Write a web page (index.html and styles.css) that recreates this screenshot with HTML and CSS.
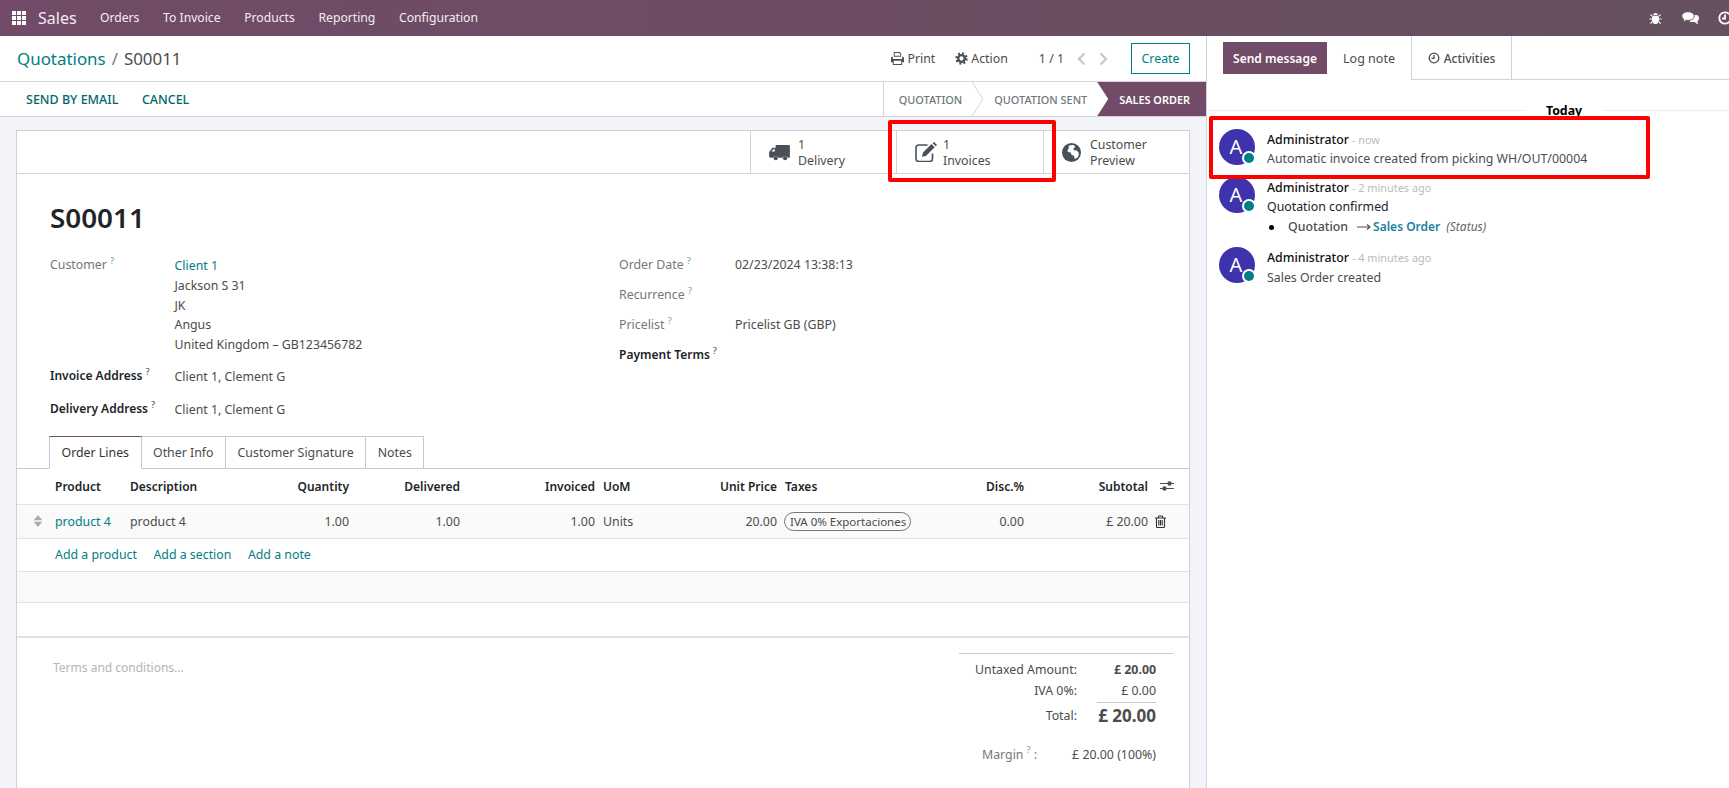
FILE: index.html
```html
<!DOCTYPE html>
<html lang="en">
<head>
<meta charset="utf-8">
<title>S00011 - Sales</title>
<link rel="stylesheet" href="styles.css">
</head>
<body>
<nav class="navbar">
  <svg class="apps" viewBox="0 0 14 14"><path d="M0 0h4v4H0zM5 0h4v4H5zM10 0h4v4h-4zM0 5h4v4H0zM5 5h4v4H5zM10 5h4v4h-4zM0 10h4v4H0zM5 10h4v4H5zM10 10h4v4h-4z"/></svg>
  <span class="brand">Sales</span>
  <a class="menu">Orders</a><a class="menu">To Invoice</a><a class="menu">Products</a><a class="menu">Reporting</a><a class="menu">Configuration</a>
  <div class="systray">
    <svg class="tray-bug" viewBox="0 0 14 14"><path d="M4.500 3.200C4.700 1.800 5.700 1 7 1s2.300.8 2.500 2.200zM4 4h6c.7 1 .9 2 .9 3.500 0 3-1.500 5.500-3.400 5.500h-1C4.600 13 3.100 10.500 3.100 7.500 3.100 6 3.300 5 4 4z"/><path class="leg" d="M3.500 4.500 1.500 3M3 7.500H.5M3.500 10.500l-2 2M10.500 4.500l2-1.500M11 7.500h2.500M10.500 10.500l2 2"/></svg>
    <svg class="tray-chat" viewBox="0 0 18 15"><path class="back" d="M7 4h8c1.700 0 3 1.200 3 3 0 1.500-.8 2.600-1.700 3.200l.9 3.300-3.700-2.500H9z"/><path class="front" d="M7 .8c3.600 0 6.300 1.900 6.300 4.300S10.600 9.400 7 9.400c-.6 0-1.200 0-1.700-.2L2 11.300l.7-3C1.500 7.500.8 6.400.8 5.100.8 2.700 3.400.8 7 .8z"/></svg>
    <svg class="tray-clock" viewBox="0 0 14 14"><circle cx="7" cy="7" r="5.700"/><path d="M7 3.500V7.500H4"/></svg>
  </div>
</nav>

<div class="workspace">
  <main class="main">
    <header class="control">
      <div class="crumbs"><a class="crumb-link">Quotations</a><span class="crumb-sep">/</span><span>S00011</span></div>
      <div class="actions">
        <span class="act act-print"><svg class="ico-print" viewBox="0 0 14 14"><path d="M3 0h6.500L11 1.500V5H3zM4 1v3h6V2H9V1zM0 6.500C0 5.700.5 5 1.500 5H2v2.500h10V5h.5c1 0 1.500.7 1.500 1.500V11h-2v3H2v-3H0zM3 9.500V13h8V9.500z"/></svg>Print</span>
        <span class="act act-action"><svg class="ico-gear" viewBox="0 0 14 14"><circle class="teeth" cx="7" cy="7" r="5.600"/><circle class="ring" cx="7" cy="7" r="3.600"/></svg>Action</span>
        <span class="pager">1 / 1</span>
        <svg class="chev chev-l" viewBox="0 0 9 14"><path d="M7.500 1.500 2 7l5.500 5.500"/></svg>
        <svg class="chev chev-r" viewBox="0 0 9 14"><path d="M1.500 1.500 7 7l-5.500 5.500"/></svg>
        <button class="create">Create</button>
      </div>
    </header>
    <div class="statusbar">
      <div class="state-btns"><a class="state-btn">SEND BY EMAIL</a><a class="state-btn">CANCEL</a></div>
      <div class="stages">
        <span class="stage">QUOTATION</span>
        <svg class="stage-arrow" viewBox="0 0 11 34"><path d="M0 0 11 17 0 34"/></svg>
        <span class="stage">QUOTATION SENT</span>
        <span class="stage stage-active">SALES ORDER</span>
      </div>
    </div>
    <div class="canvas">
      <section class="sheet">
        <div class="buttonbox">
          <a class="statbtn">
            <svg class="stat-ico ico-truck" viewBox="0 0 22 18"><path d="M7 1h14c.600 0 1 .4 1 1v11.500c0 .6-.4 1-1 1h-1.200a3 3 0 0 0-5.600 0H9.800a3 3 0 0 0-5.600 0H1.500c-.8 0-1.500-.7-1.500-1.500V8.500L3.500 4H7zM2.500 8H6V5.500H4.500z"/><circle cx="7" cy="15" r="2.200"/><circle cx="16.900" cy="15" r="2.200"/></svg>
            <span class="stat-text"><span>1</span><span>Delivery</span></span>
          </a>
          <a class="statbtn stat-inv">
            <svg class="stat-ico ico-edit" viewBox="0 0 22 20"><path class="box" d="M12.500 3H4A3 3 0 0 0 1 6v10.500a3 3 0 0 0 3 3h10.500a3 3 0 0 0 3-3V11.500"/><path class="pen" d="M8 10.500 16.500 2l3.200 3.200-8.500 8.500L7 15z"/><path class="pen" d="M17.500 1 19 0l3 3-1.200 1.300z"/></svg>
            <span class="stat-text"><span>1</span><span>Invoices</span></span>
          </a>
          <a class="statbtn stat-prev">
            <svg class="stat-ico ico-globe" viewBox="0 0 20 20"><circle cx="10" cy="10" r="10"/><path class="land" d="M7 3c2-1 4-1.300 6-.5l1 2-2 1 .5 2 3 .5 2 2 .2 3-2 3-2.500.5-.5-3-2.500-1-1-2.500-3-.5-.5-2 1.500-2z"/></svg>
            <span class="stat-text"><span>Customer</span><span>Preview</span></span>
          </a>
        </div>
        <div class="sheet-body">
          <h1 class="title">S00011</h1>
          <div class="groups">
            <div class="group-left">
              <div class="field">
                <label class="flabel muted">Customer<sup class="help">?</sup></label>
                <div class="address">
                  <a class="link first-line">Client 1</a>
                  <span>Jackson S 31</span><span>JK</span><span>Angus</span><span>United Kingdom – GB123456782</span>
                </div>
              </div>
              <div class="field field-gap">
                <label class="flabel strong">Invoice Address<sup class="help dark">?</sup></label>
                <span>Client 1, Clement G</span>
              </div>
              <div class="field field-gap">
                <label class="flabel strong">Delivery Address<sup class="help dark">?</sup></label>
                <span>Client 1, Clement G</span>
              </div>
            </div>
            <div class="group-right">
              <div class="rfield"><label class="flabel muted">Order Date<sup class="help">?</sup></label><span>02/23/2024 13:38:13</span></div>
              <div class="rfield"><label class="flabel muted">Recurrence<sup class="help">?</sup></label><span></span></div>
              <div class="rfield"><label class="flabel muted">Pricelist<sup class="help">?</sup></label><span>Pricelist GB (GBP)</span></div>
              <div class="rfield"><label class="flabel strong">Payment Terms<sup class="help dark">?</sup></label><span></span></div>
            </div>
          </div>
        </div>
        <div class="tabs">
          <a class="tab tab-active">Order Lines</a><a class="tab">Other Info</a><a class="tab">Customer Signature</a><a class="tab">Notes</a>
        </div>
        <table class="lines">
          <colgroup>
            <col class="c-handle"><col class="c-product"><col class="c-desc"><col class="c-qty"><col class="c-del"><col class="c-inv"><col class="c-uom"><col class="c-price"><col class="c-tax"><col class="c-disc"><col class="c-sub"><col class="c-end">
          </colgroup>
          <thead>
            <tr>
              <th></th><th>Product</th><th>Description</th><th class="num">Quantity</th><th class="num">Delivered</th><th class="num">Invoiced</th><th>UoM</th><th class="num">Unit Price</th><th>Taxes</th><th class="num">Disc.%</th><th class="num">Subtotal</th>
              <th class="endcell"><svg class="ico-sliders" viewBox="0 0 14 12"><path class="rail" d="M0 3.500h14M0 8.500h14"/><circle cx="9.500" cy="3.500" r="2.200"/><circle cx="4.500" cy="8.500" r="2.200"/></svg></th>
            </tr>
          </thead>
          <tbody>
            <tr class="row-data">
              <td class="handlecell"><svg class="ico-handle" viewBox="0 0 10 14"><path d="M5 0 10 6H0zM5 14 0 8h10z"/></svg></td>
              <td><a class="link">product 4</a></td><td>product 4</td><td class="num">1.00</td><td class="num">1.00</td><td class="num">1.00</td><td>Units</td><td class="num">20.00</td>
              <td><span class="tag">IVA 0% Exportaciones</span></td><td class="num">0.00</td><td class="num">£ 20.00</td>
              <td class="endcell"><svg class="ico-trash" viewBox="0 0 11 13"><path d="M1.500 3.500v8c0 .6.400 1 1 1h6c.6 0 1-.4 1-1v-8M0 3h11M3.500 3V1.300c0-.2.100-.3.300-.3h3.400c.2 0 .3.100.3.300V3M3.800 5v5.500M5.500 5v5.500M7.200 5v5.500"/></svg></td>
            </tr>
            <tr class="row-add">
              <td></td><td colspan="11"><a class="link add">Add a product</a><a class="link add">Add a section</a><a class="link add">Add a note</a></td>
            </tr>
            <tr class="row-empty"><td colspan="12"></td></tr>
          </tbody>
        </table>
        <div class="footer">
          <div class="terms">Terms and conditions...</div>
          <div class="totals">
            <div class="tot-row tot-first"><span class="tot-label">Untaxed Amount:</span><strong class="tot-val">£ 20.00</strong></div>
            <div class="tot-row"><span class="tot-label">IVA 0%:</span><span class="tot-val">£ 0.00</span></div>
            <div class="tot-row tot-grand"><span class="tot-label">Total:</span><strong class="tot-val tot-big">£ 20.00</strong></div>
            <div class="margin-row"><span class="margin-label">Margin<sup class="help">?</sup> :</span><span class="margin-val">£ 20.00 (100%)</span></div>
          </div>
        </div>
      </section>
    </div>
  </main>

  <aside class="chatter">
    <div class="chat-top">
      <button class="send">Send message</button>
      <a class="ctab ctab-log">Log note</a>
      <a class="ctab ctab-act"><svg class="ico-clock" viewBox="0 0 12 12"><circle cx="6" cy="6" r="4.800"/><path d="M6 3v3.400H3.500"/></svg>Activities</a>
      <span class="ctab-fill"></span>
    </div>
    <div class="today"><span>Today</span></div>
    <div class="msgs">
      <article class="msg msg-1">
        <div class="avatar">A<span class="dot"></span></div>
        <div class="msg-body"><div class="msg-head"><b class="author">Administrator</b><span class="when"> - now</span></div>
          <div class="msg-text">Automatic invoice created from picking WH/OUT/00004</div></div>
      </article>
      <article class="msg msg-2">
        <div class="avatar">A<span class="dot"></span></div>
        <div class="msg-body"><div class="msg-head"><b class="author">Administrator</b><span class="when"> - 2 minutes ago</span></div>
          <div class="msg-text dark-text">Quotation confirmed</div>
          <ul class="changes"><li><span>Quotation</span><svg class="ico-arrow" viewBox="0 0 14 8"><path d="M0 4h12M10 1.500 13 4l-3 2.500"/></svg><b class="newval">Sales Order</b><i class="fieldname">(Status)</i></li></ul>
        </div>
      </article>
      <article class="msg msg-3">
        <div class="avatar">A<span class="dot"></span></div>
        <div class="msg-body"><div class="msg-head"><b class="author">Administrator</b><span class="when"> - 4 minutes ago</span></div>
          <div class="msg-text msg-text-low">Sales Order created</div></div>
      </article>
    </div>
  </aside>
</div>

<div class="mark mark-invoice"></div>
<div class="mark mark-message"></div>
</body>
</html>
```

FILE: styles.css
```css
* { box-sizing: border-box; }
html, body { margin: 0; height: 100%; overflow: hidden; }
body {
  font-family: "Noto Sans", "Open Sans", sans-serif;
  font-size: 12.350px;
  color: #4c4c4c;
  background: #fff;
  display: flex;
  flex-direction: column;
  height: 788px;
  position: relative;
}
a { text-decoration: none; }

/* navbar */
.navbar {
  flex: 0 0 36px;
  height: 36px;
  display: flex;
  align-items: center;
  background: linear-gradient(90deg, #714b67 0%, #6c4d63 50%, #64505e 100%);
  color: #fff;
  padding-left: 12px;
}
.apps { width: 14px; height: 14px; fill: #fff; }
.brand { font-size: 16px; margin-left: 12px; margin-right: 11.500px; line-height: 36px; color: #f4eef2; }
.menu { padding: 0 11.800px; font-size: 12.200px; color: #f3eef2; line-height: 36px; }
.systray { margin-left: auto; display: flex; align-items: center; overflow: hidden; flex: 0 0 80px; height: 36px; }
.tray-bug { width: 13px; height: 13px; fill: #fff; flex: none; }
.tray-bug .leg { fill: none; stroke: #fff; stroke-width: 1.200; }
.tray-chat { width: 18px; height: 15px; flex: none; margin-left: 19px; }
.tray-chat .back { fill: #fff; }
.tray-chat .front { fill: #fff; stroke: #67505f; stroke-width: 1; }
.tray-clock { width: 14px; height: 14px; flex: none; margin-left: 19px; fill: none; stroke: #fff; stroke-width: 1.800; }

/* workspace */
.workspace { flex: 1; display: flex; min-height: 0; }
.main { flex: 0 0 1207px; width: 1207px; display: flex; flex-direction: column; border-right: 1px solid #ced4da; min-height: 0; }

/* control panel */
.control { flex: 0 0 46px; height: 46px; display: flex; align-items: center; padding: 0 16px 0 17px; border-bottom: 1px solid #ced4da; }
.crumbs { font-size: 16.900px; color: #4c4c4c; display: flex; gap: 6px; }
.crumb-link { color: #017e84; }
.crumb-sep { color: #777; }
.actions { margin-left: auto; display: flex; align-items: center; color: #4c4c4c; }
.act { display: flex; align-items: center; gap: 3px; }
.act-action { margin-left: 20px; }
.ico-print { width: 13px; height: 13px; fill: #495057; }
.ico-gear { width: 13px; height: 13px; fill: none; }
.ico-gear .teeth { stroke: #495057; stroke-width: 2.200; stroke-dasharray: 2.100 2.300; }
.ico-gear .ring { stroke: #495057; stroke-width: 2.600; }
.pager { margin-left: 31px; }
.chev { width: 9px; height: 14px; fill: none; stroke: #c6cacf; stroke-width: 2.400; }
.chev-l { margin-left: 13px; }
.chev-r { margin-left: 13px; }
.create { margin-left: 23px; width: 59px; height: 31px; padding: 0; background: #fff; border: 1px solid #017e84; color: #017e84; font: inherit; }

/* status bar */
.statusbar { flex: 0 0 35px; height: 35px; display: flex; align-items: stretch; border-bottom: 1px solid #ced4da; padding-left: 26px; }
.state-btns { display: flex; align-items: center; gap: 23.500px; font-weight: 500; font-size: 12.500px; }
.state-btn { color: #01666b; }
.stages { margin-left: auto; display: flex; align-items: center; border-left: 1px solid #ced4da; font-size: 10.900px; font-weight: 500; color: #6f7780; padding-left: 15px; height: 34px; }
.stage-arrow { width: 11px; height: 34px; margin: 0 11px 0 10px; fill: none; stroke: #ced4da; stroke-width: 1; flex: none; }
.stage-active { margin-left: 10px; height: 34px; background: #714b67; color: #fff; font-weight: 600; display: flex; align-items: center; padding: 0 16px 0 22px; clip-path: polygon(0 0, 100% 0, 100% 100%, 0 100%, 11px 50%); }

/* sheet */
.canvas { flex: 1; background: #f3f4f9; padding: 13px 16px 0; min-height: 0; overflow: hidden; }
.sheet { background: #fff; border: 1px solid #ced1d9; border-bottom: 0; min-height: 100%; }
.buttonbox { display: flex; justify-content: flex-end; height: 43px; border-bottom: 1px solid #ced4da; }
.statbtn { width: 146px; display: flex; align-items: center; border-left: 1px solid #ced4da; padding-left: 18px; color: #4c4c4c; }
.stat-ico { flex: none; }
.stat-text { display: flex; flex-direction: column; line-height: 16px; margin-top: 2px; }
.ico-truck { width: 21px; height: 17px; fill: #495057; margin-right: 8px; }
.ico-edit { width: 24px; height: 20px; margin-right: 5px; margin-left: -1px; fill: none; stroke: #495057; }
.ico-edit .box { stroke-width: 1.600; }
.ico-edit .pen { fill: #495057; stroke: none; }
.stat-inv { width: 147px; }
.stat-prev { width: 146px; }
.ico-globe { width: 19px; height: 19px; fill: #495057; margin-right: 9px; }
.ico-globe .land { fill: #fff; }
.sheet-body { padding: 23px 0 0 33px; }
.title { margin: 0; font-size: 27.800px; line-height: 40px; font-weight: 600; color: #212529; }
.groups { display: flex; margin-top: 18px; }
.group-left { flex: 0 0 569px; }
.group-right { flex: 1; display: flex; flex-direction: column; gap: 10px; }
.field { display: grid; grid-template-columns: 124.500px 1fr; line-height: 22px; }
.field-gap { margin-top: 12px; }
.field-gap + .field-gap { margin-top: 11px; }
.address { display: flex; flex-direction: column; line-height: 19.500px; }
.first-line { line-height: 21px; }
.flabel { display: block; line-height: 20px; }
.muted { color: #777; }
.strong { color: #212529; font-weight: 600; font-size: 12px; }
.help { color: #6aa9ac; font-size: 9.500px; margin-left: 3px; line-height: 0; font-weight: 400; }
.help.dark { color: #4c4c4c; }
.link { color: #017e84; }
.rfield { display: grid; grid-template-columns: 116px 1fr; line-height: 20px; }

/* tabs */
.tabs { display: flex; padding-left: 32px; margin-top: 15px; height: 33px; border-bottom: 1px solid #c6c9d2; }
.tab { height: 33px; padding: 0 11.500px; line-height: 32px; border: 1px solid #c6c9d2; border-left: 0; color: #4c4c4c; }
.tab-active { border-left: 1px solid #c6c9d2; border-top-color: #714b67; border-bottom-color: #fff; color: #333; }

/* table */
.lines { width: 100%; border-collapse: collapse; table-layout: fixed; }
.c-handle { width: 34px; } .c-product { width: 75px; } .c-desc { width: 144px; } .c-qty { width: 83px; }
.c-del { width: 111px; } .c-inv { width: 135px; } .c-uom { width: 81px; } .c-price { width: 101px; }
.c-tax { width: 149px; } .c-disc { width: 98px; } .c-sub { width: 124px; } .c-end { width: 37px; }
.lines th, .lines td { padding: 0 4px; border-bottom: 1px solid #e2e2e2; white-space: nowrap; text-align: left; vertical-align: middle; }
.lines th { height: 35px; padding-top: 1px; color: #212529; font-weight: 600; font-size: 12px; }
.lines .num { text-align: right; }
.row-data td { height: 34px; background: #fafafa; }
.row-add td { height: 33px; background: #fff; }
.row-empty td { height: 31px; background: #fafafa; }
.add { margin-right: 16.500px; }
.handlecell { padding-left: 16px !important; }
.ico-handle { width: 10px; height: 12px; fill: #a9aeb5; display: block; }
.endcell { padding: 0 !important; }
.ico-sliders { width: 14px; height: 12px; fill: #495057; display: block; margin-left: 8px; }
.ico-sliders .rail { stroke: #495057; stroke-width: 1.200; fill: none; }
.ico-trash { width: 11px; height: 13px; display: block; fill: none; stroke: #333; stroke-width: 1.100; margin-left: 3px; }
.tag { display: inline-block; border: 1px solid #777; border-radius: 10px; line-height: 17px; padding: 0 4px 0 5px; font-size: 11.500px; color: #4c4c4c; margin-left: -1px; }

/* footer */
.footer { margin-top: 33px; border-top: 2px solid #e2e2e2; display: flex; justify-content: space-between; padding: 15px 16px 0 36px; }
.terms { color: #b5b5b5; font-size: 12px; padding-top: 5px; line-height: 20px; }
.totals { width: 214px; border-top: 1px solid #c6c9d2; padding-top: 5px; }
.tot-row { display: grid; grid-template-columns: 118px 79px; line-height: 21px; height: 21px; }
.tot-label { text-align: right; }
.tot-val { text-align: right; }
.tot-grand { margin-top: 1px; height: 28px; }
.tot-grand .tot-val { border-top: 1px solid #c6c9d2; margin-left: 20px; line-height: 26px; color: #4c4c4c; }
.tot-grand .tot-label { line-height: 27px; }
.tot-first .tot-val { color: #4c4c4c; }
.tot-big { font-size: 17px; }
.margin-row { display: grid; margin-top: 15px; padding-left: 23px; grid-template-columns: 60px 114px; line-height: 20px; }
.margin-label { color: #777; white-space: nowrap; }
.margin-val { text-align: right; white-space: nowrap; }

/* chatter */
.chatter { flex: 1; min-width: 0; }
.chat-top { display: flex; height: 44px; align-items: flex-start; }
.send { margin: 6px 0 0 16px; width: 104px; height: 32px; border: 0; padding: 0; background: #714b67; color: #fff; font: inherit; font-weight: 600; font-size: 12px; }
.ctab { height: 44px; display: flex; align-items: center; justify-content: center; color: #4c4c4c; padding-top: 1px; }
.ctab-log { width: 85px; border-right: 1px solid #ced4da; font-size: 12.500px; }
.ctab-act { width: 100px; border-right: 1px solid #ced4da; border-bottom: 1px solid #ced4da; gap: 4px; font-weight: 500; font-size: 12px; }
.ctab-fill { flex: 1; height: 44px; border-bottom: 1px solid #ced4da; }
.ico-clock { width: 12px; height: 12px; fill: none; stroke: #495057; stroke-width: 1.300; }
.today { margin-top: 20px; height: 20px; display: flex; align-items: center; justify-content: center; background: linear-gradient(#eee, #eee) center / 100% 1px no-repeat; padding-left: 192px; }
.today span { background: #fff; padding: 1px 20px 0; color: #000; font-weight: 700; line-height: 20px; }
.msgs { padding: 9px 0 0 12px; }
.msg { display: flex; }
.msg-1 { height: 48px; }
.msg-2 { height: 70px; }
.avatar { position: relative; width: 36px; height: 36px; border-radius: 50%; background: #3e33ad; color: #fff; font-size: 20px; display: flex; align-items: center; justify-content: center; flex: none; line-height: 1; padding-right: 2px; }
.dot { position: absolute; right: -1px; bottom: 0; width: 14px; height: 14px; border-radius: 50%; background: #017e84; border: 2px solid #fff; }
.msg-body { margin-left: 12px; padding-top: 1px; }
.msg-1 .msg-body { padding-top: 2px; }
.msg-1 .msg-head { line-height: 18px; }
.msg-head { line-height: 19px; }
.author { font-weight: 500; color: #111; }
.when { color: #bbb; font-size: 10.900px; }
.msg-text { line-height: 20px; }
.msg-text-low { margin-top: 1px; }
.dark-text { color: #212529; }
.changes { margin: 0; padding: 0 0 0 2px; line-height: 20px; color: #111; list-style: none; }
.changes li { display: flex; align-items: center; }
.changes li::before { content: ""; width: 5px; height: 5px; border-radius: 50%; background: #000; margin-right: 14px; }
.changes li > span { color: #4c4c4c; font-weight: 500; }
.ico-arrow { width: 14px; height: 8px; fill: none; stroke: #4c4c4c; stroke-width: 1.100; margin: 0 2px 0 9px; }
.newval { color: #1e7fa0; font-weight: 600; font-size: 12px; }
.fieldname { color: #666; margin-left: 6px; font-size: 12px; }

/* annotation rectangles laid over the screenshot */
.mark { position: absolute; border: 4px solid #f00; border-radius: 2px; pointer-events: none; }
.mark-invoice { left: 888px; top: 120px; width: 168px; height: 62px; }
.mark-message { left: 1209px; top: 116px; width: 441px; height: 63px; }
```
